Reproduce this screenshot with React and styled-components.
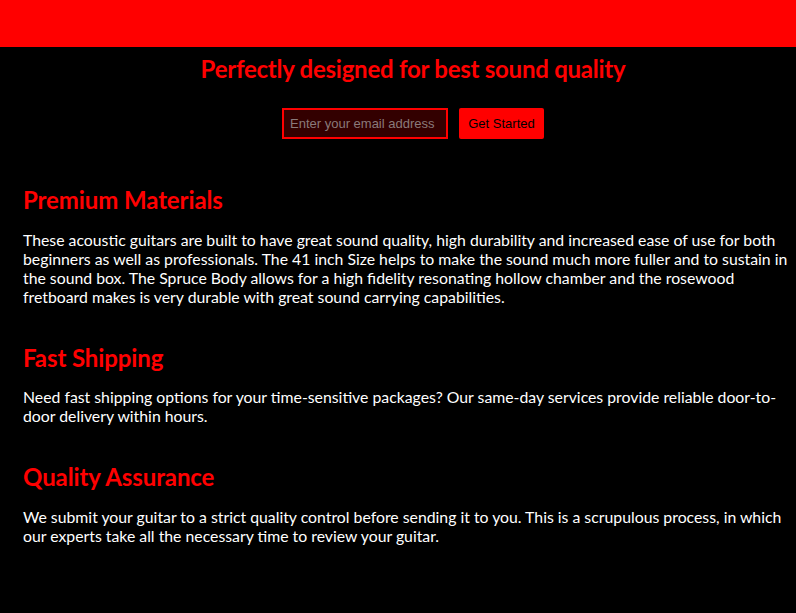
import React from "react";
import styled, { createGlobalStyle } from "styled-components";

const Global = createGlobalStyle`
  html, body { margin: 0; padding: 0; background: #000; }
  body { font-family: Lato, "Noto Sans", sans-serif; }
  * { box-sizing: border-box; }
`;

const Header = styled.header`
  height: 47px;
  background: #ff0000;
`;

const Hero = styled.section`
  display: flex;
  flex-direction: column;
  align-items: center;
  padding: 7px 0 0 30px;
`;

const Title = styled.h2`
  margin: 0;
  color: #ff0000;
  font-family: Lato, sans-serif;
  font-weight: 700;
  font-size: 24px;
  line-height: 29px;
  letter-spacing: -0.25px;
`;

const Form = styled.form`
  display: flex;
  gap: 11px;
  margin-top: 25px;
`;

const EmailInput = styled.input`
  width: 166px;
  height: 31px;
  background: #330000;
  border: 2px solid #ff0000;
  color: #fff;
  font-family: "Liberation Sans", Arial, sans-serif;
  font-size: 13px;
  padding: 0 6px;
  outline: none;
  &::placeholder { color: #8a7a7a; }
`;

const Button = styled.button`
  height: 31px;
  width: 85px;
  background: #ff0000;
  border: none;
  border-radius: 2px;
  color: #000;
  font-family: "Liberation Sans", Arial, sans-serif;
  font-size: 13px;
  padding: 0;
`;

const Features = styled.main`
  padding: 46px 6px 0 23px;
  display: flex;
  flex-direction: column;
`;

const Feature = styled.article`
  margin-bottom: 36.8px;
`;

const Heading = styled.h3`
  margin: 0 0 15.8px;
  color: #ff0000;
  font-family: Lato, sans-serif;
  font-weight: 700;
  font-size: 24px;
  line-height: 29px;
  letter-spacing: -0.1px;
`;

const Text = styled.p`
  margin: 0;
  color: #fff;
  font-family: Lato, sans-serif;
  font-size: 15.8px;
  line-height: 19px;
`;

const items = [
  {
    title: "Premium Materials",
    text: "These acoustic guitars are built to have great sound quality, high durability and increased ease of use for both beginners as well as professionals. The 41 inch Size helps to make the sound much more fuller and to sustain in the sound box. The Spruce Body allows for a high fidelity resonating hollow chamber and the rosewood fretboard makes is very durable with great sound carrying capabilities.",
  },
  {
    title: "Fast Shipping",
    text: "Need fast shipping options for your time-sensitive packages? Our same-day services provide reliable door-to-door delivery within hours.",
  },
  {
    title: "Quality Assurance",
    text: "We submit your guitar to a strict quality control before sending it to you. This is a scrupulous process, in which our experts take all the necessary time to review your guitar.",
  },
];

export default function App() {
  return (
    <>
      <Global />
      <Header />
      <Hero>
        <Title>Perfectly designed for best sound quality</Title>
        <Form onSubmit={(e) => e.preventDefault()}>
          <EmailInput type="email" placeholder="Enter your email address" />
          <Button type="submit">Get Started</Button>
        </Form>
      </Hero>
      <Features>
        {items.map((it) => (
          <Feature key={it.title}>
            <Heading>{it.title}</Heading>
            <Text>{it.text}</Text>
          </Feature>
        ))}
      </Features>
    </>
  );
}
